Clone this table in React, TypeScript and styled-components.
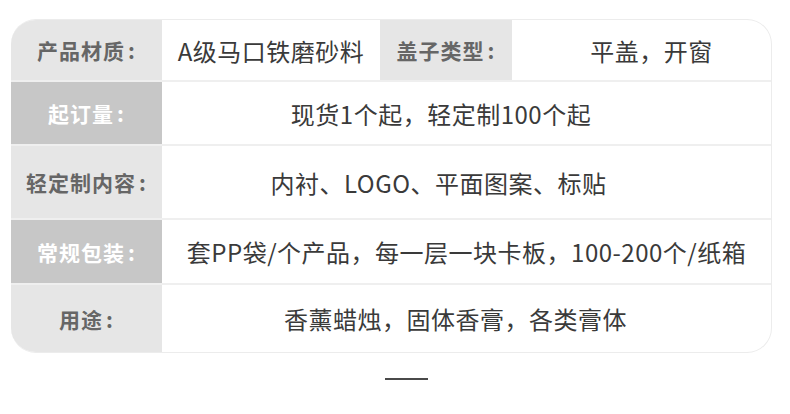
import styled, { createGlobalStyle } from "styled-components";

const GlobalStyle = createGlobalStyle`
  html, body {
    margin: 0;
    padding: 0;
    background: #ffffff;
  }
  body {
    font-family: "Noto Sans CJK SC", "Noto Sans", sans-serif;
  }
`;

const Page = styled.div`
  width: 790px;
  height: 414px;
  padding: 19px 18px 0 11px;
  box-sizing: border-box;
  display: flex;
  flex-direction: column;
`;

const Card = styled.div`
  width: 761px;
  border: 1px solid #ececec;
  border-left: none;
  border-radius: 25px;
  overflow: hidden;
  display: flex;
  flex-direction: column;
  box-sizing: border-box;
`;

const Row = styled.div<{ $h: number; $last?: boolean }>`
  display: flex;
  height: ${(p) => p.$h}px;
  border-bottom: ${(p) => (p.$last ? "none" : "2px solid #efefef")};
  box-sizing: border-box;
`;

const Label = styled.div<{ $dark?: boolean; $w: number }>`
  width: ${(p) => p.$w}px;
  flex-shrink: 0;
  display: flex;
  align-items: center;
  justify-content: center;
  background: ${(p) => (p.$dark ? "#c7c7c7" : "#e6e6e6")};
  color: ${(p) => (p.$dark ? "#ffffff" : "#666666")};
  font-size: 21px;
  font-weight: 700;
  letter-spacing: 1px;
`;

const Colon = styled.span`
  margin-left: 3px;
`;

const Value = styled.div<{ $w?: number; $pl?: number; $pr?: number }>`
  ${(p) => (p.$w ? `width: ${p.$w}px; flex-shrink: 0;` : "flex: 1;")}
  display: flex;
  align-items: center;
  justify-content: center;
  padding-left: ${(p) => p.$pl ?? 0}px;
  padding-right: ${(p) => p.$pr ?? 0}px;
  box-sizing: border-box;
  color: #3a3a3a;
  font-size: 24px;
  letter-spacing: 0.5px;
  white-space: nowrap;
`;

const Dash = styled.div`
  width: 43px;
  height: 2px;
  background: #4a4a4a;
  margin: 25px 0 0 374px;
`;

const rows = [
  { h: 64, label: "起订量", dark: true, value: "现货1个起，轻定制100个起", pr: 51 },
  { h: 74, label: "轻定制内容", dark: false, value: "内衬、LOGO、平面图案、标贴", pr: 56 },
  { h: 65, label: "常规包装", dark: true, value: "套PP袋/个产品，每一层一块卡板，100-200个/纸箱", pr: 0 },
  { h: 67, label: "用途", dark: false, value: "香薰蜡烛，固体香膏，各类膏体", pr: 22 },
];

export default function App() {
  return (
    <>
      <GlobalStyle />
      <Page>
        <Card>
          <Row $h={62}>
            <Label $w={151}>
              产品材质<Colon>:</Colon>
            </Label>
            <Value $w={218}>A级马口铁磨砂料</Value>
            <Label $w={132}>
              盖子类型<Colon>:</Colon>
            </Label>
            <Value $pl={20}>平盖，开窗</Value>
          </Row>
          {rows.map((r, i) => (
            <Row key={r.label} $h={r.h} $last={i === rows.length - 1}>
              <Label $w={151} $dark={r.dark}>
                {r.label}
                <Colon>:</Colon>
              </Label>
              <Value $pr={r.pr}>{r.value}</Value>
            </Row>
          ))}
        </Card>
        <Dash />
      </Page>
    </>
  );
}
